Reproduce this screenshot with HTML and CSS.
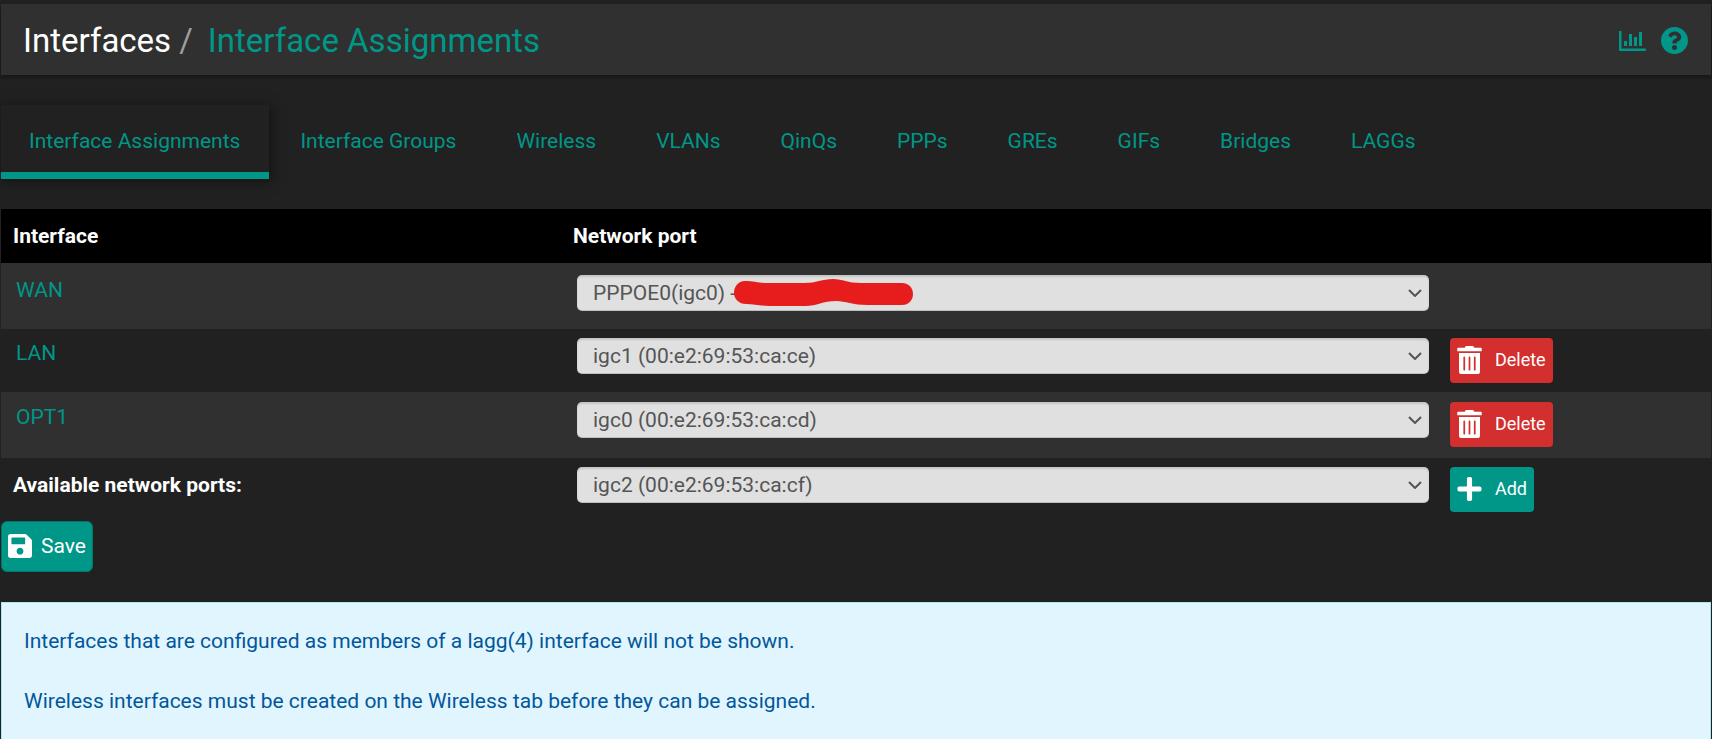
FILE: index.html
```html
<!DOCTYPE html>
<html lang="en">
<head>
<meta charset="utf-8">
<title>Interfaces: Interface Assignments</title>
<link rel="stylesheet" href="styles.css">
</head>
<body>
<svg class="sprite" aria-hidden="true">
  <symbol id="trash" viewBox="0 0 448 512"><path d="M32 464a48 48 0 0 0 48 48h288a48 48 0 0 0 48-48V128H32zm272-256a16 16 0 0 1 32 0v224a16 16 0 0 1-32 0zm-96 0a16 16 0 0 1 32 0v224a16 16 0 0 1-32 0zm-96 0a16 16 0 0 1 32 0v224a16 16 0 0 1-32 0zM432 32H312l-9.4-18.7A24 24 0 0 0 281.1 0H166.8a23.72 23.72 0 0 0-21.4 13.3L136 32H16A16 16 0 0 0 0 48v32a16 16 0 0 0 16 16h416a16 16 0 0 0 16-16V48a16 16 0 0 0-16-16z"/></symbol>
  <symbol id="plus" viewBox="0 32 448 448"><path d="M416 208H272V64c0-17.67-14.33-32-32-32h-32c-17.67 0-32 14.33-32 32v144H32c-17.67 0-32 14.33-32 32v32c0 17.67 14.33 32 32 32h144v144c0 17.67 14.33 32 32 32h32c17.67 0 32-14.33 32-32V304h144c17.67 0 32-14.33 32-32v-32c0-17.67-14.33-32-32-32z"/></symbol>
  <symbol id="chevron" viewBox="0 0 14 8"><path d="M1 1l6 6 6-6" fill="none" stroke="currentColor" stroke-width="2"/></symbol>
</svg>

<header class="page-header">
  <h1 class="title">Interfaces<span class="slash">/</span><a class="link" href="#">Interface Assignments</a></h1>
  <div class="header-icons">
    <a class="link" href="#" aria-label="Status">
      <svg class="icon-chart" viewBox="0 0 27 20" fill="currentColor"><path d="M0 1a1 1 0 0 1 2.500 0v16.500h23.500a1.200 1.200 0 0 1 0 2.500H1a1 1 0 0 1-1-1zM5 10h3v5H5zM10 3h3v12h-3zM15 6h3v9h-3zM20 1h3v14h-3z"/></svg>
    </a>
    <a class="link" href="#" aria-label="Help">
      <svg class="icon-help" viewBox="8 8 496 496" fill="currentColor"><path d="M504 256c0 136.997-111.043 248-248 248S8 392.997 8 256C8 119.083 119.043 8 256 8s248 111.083 248 248zM262.655 90c-54.497 0-89.255 22.957-116.549 63.758-3.536 5.286-2.353 12.415 2.715 16.258l34.699 26.31c5.205 3.947 12.621 3.008 16.665-2.122 17.864-22.658 30.113-35.797 57.303-35.797 20.429 0 45.698 13.148 45.698 32.958 0 14.976-12.363 22.667-32.534 33.976C247.128 238.528 216 254.941 216 296v4c0 6.627 5.373 12 12 12h56c6.627 0 12-5.373 12-12v-1.333c0-28.462 83.186-29.647 83.186-106.667 0-58.002-60.165-102-116.531-102zM256 338c-25.365 0-46 20.635-46 46 0 25.364 20.635 46 46 46s46-20.636 46-46c0-25.365-20.635-46-46-46z"/></svg>
    </a>
  </div>
</header>

<nav class="tabs">
  <a class="tab active" href="#">Interface Assignments</a>
  <a class="tab" href="#">Interface Groups</a>
  <a class="tab" href="#">Wireless</a>
  <a class="tab" href="#">VLANs</a>
  <a class="tab" href="#">QinQs</a>
  <a class="tab" href="#">PPPs</a>
  <a class="tab" href="#">GREs</a>
  <a class="tab" href="#">GIFs</a>
  <a class="tab" href="#">Bridges</a>
  <a class="tab" href="#">LAGGs</a>
</nav>

<form>
  <table class="ports">
    <colgroup><col class="col-name"><col class="col-port"><col></colgroup>
    <thead>
      <tr><th scope="col">Interface</th><th scope="col">Network port</th><th></th></tr>
    </thead>
    <tbody>
      <tr class="striped">
        <td class="name"><a class="link" href="#">WAN</a></td>
        <td class="port"><div class="picker">
          <select aria-label="WAN port"><option>PPPOE0(igc0) -</option></select>
          <svg class="chevron"><use href="#chevron"/></svg>
          <svg class="redaction" viewBox="0 0 179 27"><path d="M11 2C4 2 0 8 0 14c0 6 5 11 12 11 9 0 14 2 24 2h35c12 0 18-5 31-5 10 0 16 4 32 4h34c7 0 11-5 11-11s-4-11-11-11h-41c-14 0-18-4-28-4-11 0-17 4-28 4H33C25 4 20 2 11 2z" fill="#e71d1d"/></svg>
        </div></td>
        <td></td>
      </tr>
      <tr>
        <td class="name"><a class="link" href="#">LAN</a></td>
        <td class="port"><div class="picker">
          <select aria-label="LAN port"><option>igc1 (00:e2:69:53:ca:ce)</option></select>
          <svg class="chevron"><use href="#chevron"/></svg>
        </div></td>
        <td class="action"><button type="button" class="btn danger"><svg class="icon-trash"><use href="#trash"/></svg>Delete</button></td>
      </tr>
      <tr class="striped">
        <td class="name"><a class="link" href="#">OPT1</a></td>
        <td class="port"><div class="picker">
          <select aria-label="OPT1 port"><option>igc0 (00:e2:69:53:ca:cd)</option></select>
          <svg class="chevron"><use href="#chevron"/></svg>
        </div></td>
        <td class="action"><button type="button" class="btn danger"><svg class="icon-trash"><use href="#trash"/></svg>Delete</button></td>
      </tr>
      <tr>
        <th scope="row">Available network ports:</th>
        <td class="port"><div class="picker">
          <select aria-label="Available network ports"><option>igc2 (00:e2:69:53:ca:cf)</option></select>
          <svg class="chevron"><use href="#chevron"/></svg>
        </div></td>
        <td class="action"><button type="button" class="btn"><svg class="icon-plus"><use href="#plus"/></svg>Add</button></td>
      </tr>
    </tbody>
  </table>
  <button type="submit" class="btn save"><svg class="icon-save" viewBox="0 32 448 448"><path d="M433.941 129.941l-83.882-83.882A48 48 0 0 0 316.118 32H48C21.49 32 0 53.49 0 80v352c0 26.51 21.49 48 48 48h352c26.51 0 48-21.49 48-48V163.882a48 48 0 0 0-14.059-33.941zM224 416c-35.346 0-64-28.654-64-64 0-35.346 28.654-64 64-64s64 28.654 64 64c0 35.346-28.654 64-64 64zm96-304.52V212c0 6.627-5.373 12-12 12H76c-6.627 0-12-5.373-12-12V108c0-6.627 5.373-12 12-12h228.52c3.183 0 6.235 1.264 8.485 3.515l3.48 3.48A11.996 11.996 0 0 1 320 111.48z"/></svg>Save</button>
</form>

<section class="notice">
  <p>Interfaces that are configured as members of a lagg(4) interface will not be shown.</p>
  <p>Wireless interfaces must be created on the Wireless tab before they can be assigned.</p>
</section>
</body>
</html>
```
FILE: styles.css
```css
* {
  box-sizing: border-box;
}

body {
  display: flex;
  flex-direction: column;
  min-height: 100vh;
  margin: 0;
  padding: 4px 1px 0;
  background: #212121;
  color: #fff;
  font-family: Roboto, sans-serif;
  font-size: 21px;
  line-height: 30px;
}

.sprite {
  display: none;
}

.link {
  color: #009688;
  text-decoration: none;
}

.page-header {
  display: flex;
  align-items: center;
  justify-content: space-between;
  padding: 17px 23px 15px 22px;
  background: #303030;
  box-shadow: 0 2px 4px rgba(0, 0, 0, 0.4);
}

.title {
  display: flex;
  margin: 0;
  font-size: 33px;
  font-weight: 400;
  line-height: 39px;
}

.slash {
  padding: 0 15px 0 8px;
  color: #9e9e9e;
}

.header-icons {
  display: flex;
  align-items: center;
  gap: 15px;
}

.header-icons .link {
  display: flex;
}

.icon-chart {
  width: 27px;
  height: 20px;
}

.icon-help {
  width: 27px;
  height: 27px;
}

.tabs {
  display: flex;
  gap: 3px;
  margin: 30px 0;
}

.tab {
  padding: 21px 29px 16px 28px;
  border-bottom: 7px solid transparent;
  color: #009688;
  text-decoration: none;
}

.tab.active {
  border-bottom-color: #009688;
  box-shadow: 2px 2px 12px rgba(0, 0, 0, 0.5);
}

.ports {
  width: 100%;
  table-layout: fixed;
  border-collapse: collapse;
}

.col-name {
  width: 32.75%;
}

.col-port {
  width: 51.4%;
}

th,
td {
  padding: 9px 11px;
  text-align: left;
  vertical-align: top;
}

th {
  padding: 12px;
  font-weight: 700;
}

tbody th {
  padding-left: 12px;
}

thead {
  background: #000;
}

tbody tr {
  height: 63px;
}

tbody .striped {
  height: 66px;
  background: #303030;
}

.striped td {
  padding-top: 10px;
}

.striped:first-child td {
  padding-top: 12px;
}

.name {
  padding-left: 15px;
}

.port {
  padding-left: 16px;
}

.action {
  padding-left: 10px;
}

.picker {
  position: relative;
}

select {
  display: block;
  width: 100%;
  height: 36px;
  padding: 0 40px 0 16px;
  border: 0;
  border-radius: 5px;
  background: #e0e0e0;
  box-shadow: inset 0 2px 2px rgba(0, 0, 0, 0.12), inset 0 -1px 0 rgba(0, 0, 0, 0.15);
  color: #555;
  font: inherit;
  appearance: none;
}

.chevron {
  position: absolute;
  top: 14px;
  right: 7px;
  width: 14px;
  height: 8px;
  color: #555;
  pointer-events: none;
}

.redaction {
  position: absolute;
  top: 4px;
  left: 157px;
  width: 179px;
  height: 27px;
}

.btn {
  display: flex;
  align-items: center;
  gap: 13px;
  height: 45px;
  padding: 0 7px 2px;
  border: 0;
  border-radius: 4px;
  background: #009688;
  color: #fff;
  fill: currentColor;
  font: inherit;
  font-size: 18px;
}

.danger {
  background: #d32f2f;
}

.icon-plus {
  width: 25px;
  height: 24px;
}

.icon-save {
  width: 24px;
  height: 24px;
}

.icon-trash {
  width: 25px;
  height: 28px;
}

.save {
  gap: 9px;
  height: 51px;
  padding: 0 6px 1px;
  border: 1px solid #00796b;
  border-radius: 6px;
  font-size: 21px;
}

.notice {
  flex: 1;
  margin-top: 30px;
  padding: 23px 22px;
  border: 1px solid #a7ebee;
  background: #e1f5fe;
  color: #01579b;
}

.notice p {
  margin: 0 0 30px;
}
```
